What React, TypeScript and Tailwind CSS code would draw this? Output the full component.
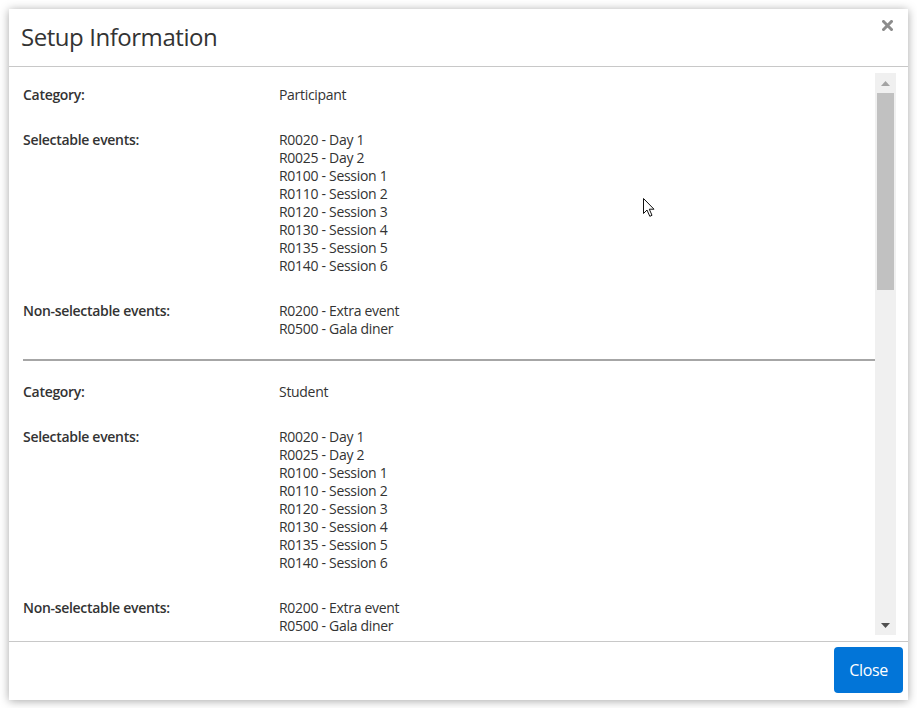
import React from 'react';

interface CategoryInfo {
  name: string;
  selectable: string[];
  nonSelectable: string[];
}

const sessions = [
  'R0020 - Day 1',
  'R0025 - Day 2',
  'R0100 - Session 1',
  'R0110 - Session 2',
  'R0120 - Session 3',
  'R0130 - Session 4',
  'R0135 - Session 5',
  'R0140 - Session 6',
];

const categories: CategoryInfo[] = [
  { name: 'Participant', selectable: sessions, nonSelectable: ['R0200 - Extra event', 'R0500 - Gala diner'] },
  { name: 'Student', selectable: sessions, nonSelectable: ['R0200 - Extra event', 'R0500 - Gala diner'] },
];

const Row = ({ label, values }: { label: string; values: string[] }) => (
  <div className="flex mb-[27px] last:mb-0">
    <div className="w-[256px] shrink-0 font-semibold text-[#333]">{label}</div>
    <div className="text-[#333]">
      {values.map((v) => (
        <div key={v}>{v}</div>
      ))}
    </div>
  </div>
);

const Cursor = () => (
  <svg className="absolute left-[643px] top-[198px]" width="13" height="20" viewBox="0 0 13 20">
    <path d="M0.5 0.5 L0.5 15.5 L4 12 L6.8 18.3 L9 17.3 L6.3 11.2 L11 11.2 Z" fill="#fff" stroke="#111" strokeWidth="1" strokeLinejoin="round" />
  </svg>
);

export default function App() {
  return (
    <div
      className="relative h-[708px] w-[917px] bg-white p-[9px] text-[14px] leading-[18px] tracking-[-0.3px]"
      style={{ fontFamily: '"Open Sans", "Noto Sans", sans-serif' }}
    >
      <div className="flex h-[691px] flex-col bg-white shadow-[0_1px_9px_rgba(0,0,0,0.35)]">
        {/* header */}
        <div className="flex h-[58px] shrink-0 items-start justify-between border-b border-[#c8c8c8] pl-[12px] pr-[15px]">
          <h4 className="pt-[13px] text-[24px] font-medium leading-[30px] tracking-[-0.45px] text-[#333]">Setup Information</h4>
          <button className="mt-[11px] text-[#8c8c8c]" aria-label="Close">
            <svg width="11" height="11" viewBox="0 0 11 11">
              <path d="M1.5 1.5 L9.5 9.5 M9.5 1.5 L1.5 9.5" stroke="currentColor" strokeWidth="3" strokeLinecap="square" />
            </svg>
          </button>
        </div>

        {/* body */}
        <div className="flex min-h-0 flex-1 py-[6px] pr-[12px]">
          <div className="min-w-0 flex-1 overflow-hidden pl-[14px] pt-[13px]">
            {categories.map((c, i) => (
              <div key={c.name}>
                {i > 0 && <hr className="mb-[22px] mt-[21px] border-0 border-t-2 border-t-[#a6a6a6]" />}
                <Row label="Category:" values={[c.name]} />
                <Row label="Selectable events:" values={c.selectable} />
                <Row label="Non-selectable events:" values={c.nonSelectable} />
              </div>
            ))}
          </div>
          {/* scrollbar */}
          <div className="flex w-[21px] shrink-0 flex-col bg-[#f0f0f0]">
            <div className="flex h-[20px] items-center justify-center">
              <svg width="9" height="5" viewBox="0 0 9 5"><path d="M0 5 L4.5 0 L9 5 Z" fill="#a3a3a3" /></svg>
            </div>
            <div className="mx-[2px] h-[197px] bg-[#c1c1c1]" />
            <div className="flex-1" />
            <div className="flex h-[20px] items-center justify-center">
              <svg width="9" height="5" viewBox="0 0 9 5"><path d="M0 0 L9 0 L4.5 5 Z" fill="#505050" /></svg>
            </div>
          </div>
        </div>

        {/* footer */}
        <div className="flex h-[59px] shrink-0 items-start justify-end border-t border-[#c8c8c8] pr-[5px] pt-[5px]">
          <button className="h-[46px] rounded-[4px] bg-[#0275d8] px-[15px] text-[16px] text-white">Close</button>
        </div>
      </div>
      <Cursor />
    </div>
  );
}
